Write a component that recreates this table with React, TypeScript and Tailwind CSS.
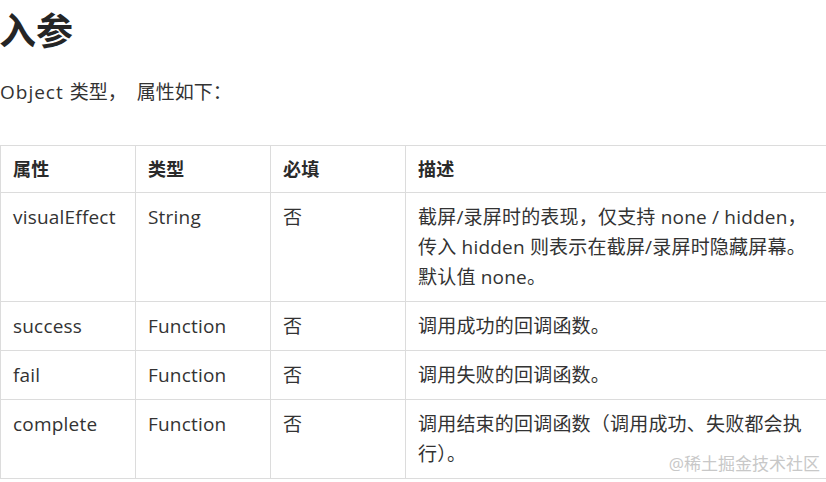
import React from "react";

const rows: { name: string; type: string; req: string; desc: React.ReactNode }[] = [
  {
    name: "visualEffect",
    type: "String",
    req: "否",
    desc: (
      <>
        截屏/录屏时的表现，仅支持 none / hidden，
        <br />
        传入 hidden 则表示在截屏/录屏时隐藏屏幕。
        <br />
        默认值 none。
      </>
    ),
  },
  { name: "success", type: "Function", req: "否", desc: "调用成功的回调函数。" },
  { name: "fail", type: "Function", req: "否", desc: "调用失败的回调函数。" },
  {
    name: "complete",
    type: "Function",
    req: "否",
    desc: (
      <>
        调用结束的回调函数（调用成功、失败都会执
        <br />
        行）。
      </>
    ),
  },
];

export default function App() {
  return (
    <div
      className="relative w-[826px] h-[482px] overflow-hidden bg-white text-[#333333]"
      style={{ fontFamily: '"Open Sans", "Noto Sans CJK SC", sans-serif' }}
    >
      <h1 className="mt-[4px] text-[37px] leading-[54px] font-bold text-[#252525] -ml-[1px]">入参</h1>
      <p className="mt-[19px] text-[19px] leading-[30px]">
        <span className="tracking-[1px]">Object</span>
        <span className="ml-[6px]">类型，</span>
        <span className="ml-[10px]">属性如下：</span>
      </p>
      <table className="mt-[38px] w-[880px] border-collapse text-[19px] leading-[30px] table-fixed tracking-[0.2px]">
        <colgroup>
          <col className="w-[135px]" />
          <col className="w-[135px]" />
          <col className="w-[135px]" />
          <col />
        </colgroup>
        <thead>
          <tr>
            {["属性", "类型", "必填", "描述"].map((h) => (
              <th
                key={h}
                className="border border-[#dcdcdc] px-[12px] py-[8px] text-left align-top font-bold text-[18px] text-[#2a2a2a]"
              >
                {h}
              </th>
            ))}
          </tr>
        </thead>
        <tbody>
          {rows.map((r) => (
            <tr key={r.name}>
              <td className="border border-[#dcdcdc] px-[12px] py-[9px] align-top">{r.name}</td>
              <td className="border border-[#dcdcdc] px-[12px] py-[9px] align-top">{r.type}</td>
              <td className="border border-[#dcdcdc] px-[12px] py-[9px] align-top">{r.req}</td>
              <td className="border border-[#dcdcdc] px-[12px] py-[9px] align-top whitespace-nowrap">
                {r.desc}
              </td>
            </tr>
          ))}
        </tbody>
      </table>
      <div
        className="absolute right-[6px] bottom-[6px] text-[17px] leading-[24px] text-[#c8c8c8]"
        style={{ textShadow: "0 0 2px #ffffff" }}
      >
        @稀土掘金技术社区
      </div>
    </div>
  );
}
